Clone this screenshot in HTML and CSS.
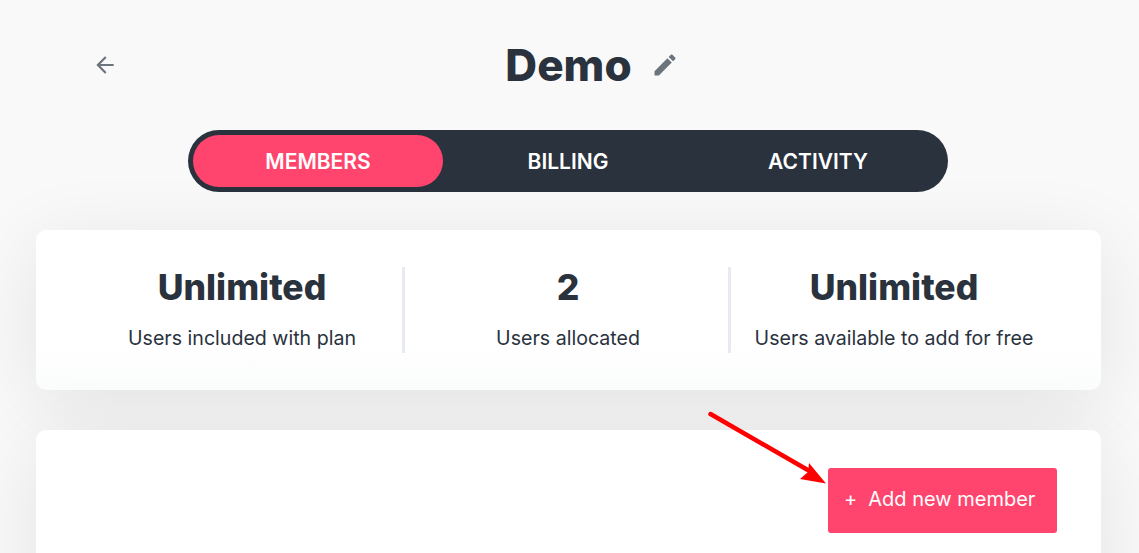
FILE: index.html
```html
<!DOCTYPE html>
<html lang="en">
<head>
    <meta charset="UTF-8">
    <title>Demo - Members</title>
    <link rel="stylesheet" href="styles.css">
</head>
<body>

    <!-- Header -->
    <div class="header">
        <a href="#" class="back-btn">
            <svg width="26" height="26" viewBox="0 0 24 24"><path d="M20 11H7.83l5.59-5.59L12 4l-8 8 8 8 1.41-1.41L7.83 13H20v-2z"/></svg>
        </a>
        <h1>Demo</h1>
        <a href="#" class="edit-btn">
            <svg width="28" height="28" viewBox="0 0 24 24"><path d="M3 17.25V21h3.75L17.81 9.94l-3.75-3.75L3 17.25zM20.71 7.04a1 1 0 0 0 0-1.41l-2.34-2.34a1 1 0 0 0-1.41 0l-1.83 1.83 3.75 3.75 1.83-1.83z"/></svg>
        </a>
    </div>

    <!-- Tabs -->
    <div class="tabs">
        <a href="#" class="tab active">MEMBERS</a>
        <a href="#" class="tab">BILLING</a>
        <a href="#" class="tab">ACTIVITY</a>
    </div>

    <!-- Stats Card -->
    <div class="card stats-card">
        <div class="stat">
            <h2>Unlimited</h2>
            <p>Users included with plan</p>
        </div>
        <div class="stat">
            <h2>2</h2>
            <p>Users allocated</p>
        </div>
        <div class="stat">
            <h2>Unlimited</h2>
            <p>Users available to add for free</p>
        </div>
    </div>

    <!-- Members Card -->
    <div class="card members-card">
        <a href="#" class="btn"><span class="plus">+</span>Add new member</a>
    </div>

    <!-- Annotation arrow -->
    <svg class="arrow" width="130" height="80" viewBox="0 0 130 80">
        <path d="M3.5 3 L106 62" stroke="#ff0000" stroke-width="4.5" stroke-linecap="round" fill="none"/>
        <path d="M119 72.5 L93 68 L101 61 L102 52 Z" fill="#ff0000"/>
    </svg>

</body>
</html>
```

FILE: styles.css
```css
/* General Styling */
html, body {
    height: 553px;
    overflow: hidden;
}

body {
    font-family: "Inter", "Liberation Sans", sans-serif;
    background-color: #f9f9f9;
    color: #29323d;
    margin: 0;
    padding: 0 38px 0 36px;
    position: relative;
}

/* Header */
.header {
    display: flex;
    justify-content: center;
    align-items: center;
    gap: 19px;
    height: 130px;
    padding-left: 47px;
    padding-bottom: 1px;
    box-sizing: border-box;
    position: relative;
}

.header h1 {
    font-size: 44px;
    font-weight: 800;
    margin: 0;
}

.back-btn {
    position: absolute;
    left: 56px;
    top: 52px;
    display: flex;
}

.back-btn svg {
    fill: #6c757d;
}

.edit-btn {
    display: flex;
}

.edit-btn svg {
    fill: #6c757d;
}

/* Tabs */
.tabs {
    display: flex;
    width: 750px;
    margin: 0 0 38px 152px;
    padding: 5px;
    background-color: #29323d;
    border-radius: 31px;
}

.tab {
    flex: 1;
    height: 52px;
    line-height: 53px;
    text-align: center;
    color: white;
    font-size: 21px;
    font-weight: 600;
    text-decoration: none;
    border-radius: 26px;
}

.tab.active {
    background-color: #ff456d;
}

/* Cards */
.card {
    background-color: white;
    border-radius: 10px;
    box-shadow: 0 15px 80px rgba(0, 0, 0, 0.09);
}

.stats-card {
    display: flex;
    padding: 37px 44px 37px 43px;
    margin-bottom: 40px;
    background-image: linear-gradient(#ffffff 70%, #fbfcfc);
}

.stat {
    width: 326px;
    height: 86px;
    text-align: center;
    box-shadow: inset -3px 0 0 #e7eaf1;
}

.stat:last-child {
    box-shadow: none;
}

.stat h2 {
    font-size: 35.5px;
    line-height: 42px;
    font-weight: 800;
    margin: 0 0 15px;
}

.stat p {
    font-size: 19.6px;
    line-height: 28px;
    margin: 0;
}

.members-card {
    display: flex;
    justify-content: flex-end;
    padding: 38px 44px;
    height: 200px;
}

.btn {
    display: block;
    height: 65px;
    line-height: 63px;
    width: 229px;
    box-sizing: border-box;
    padding-left: 16px;
    background-color: #ff456d;
    color: white;
    font-size: 20px;
    text-decoration: none;
    border-radius: 3px;
}

.plus {
    margin-right: 11px;
}

/* Annotation arrow sits over the page */
.arrow {
    position: absolute;
    left: 707px;
    top: 411px;
}
```
